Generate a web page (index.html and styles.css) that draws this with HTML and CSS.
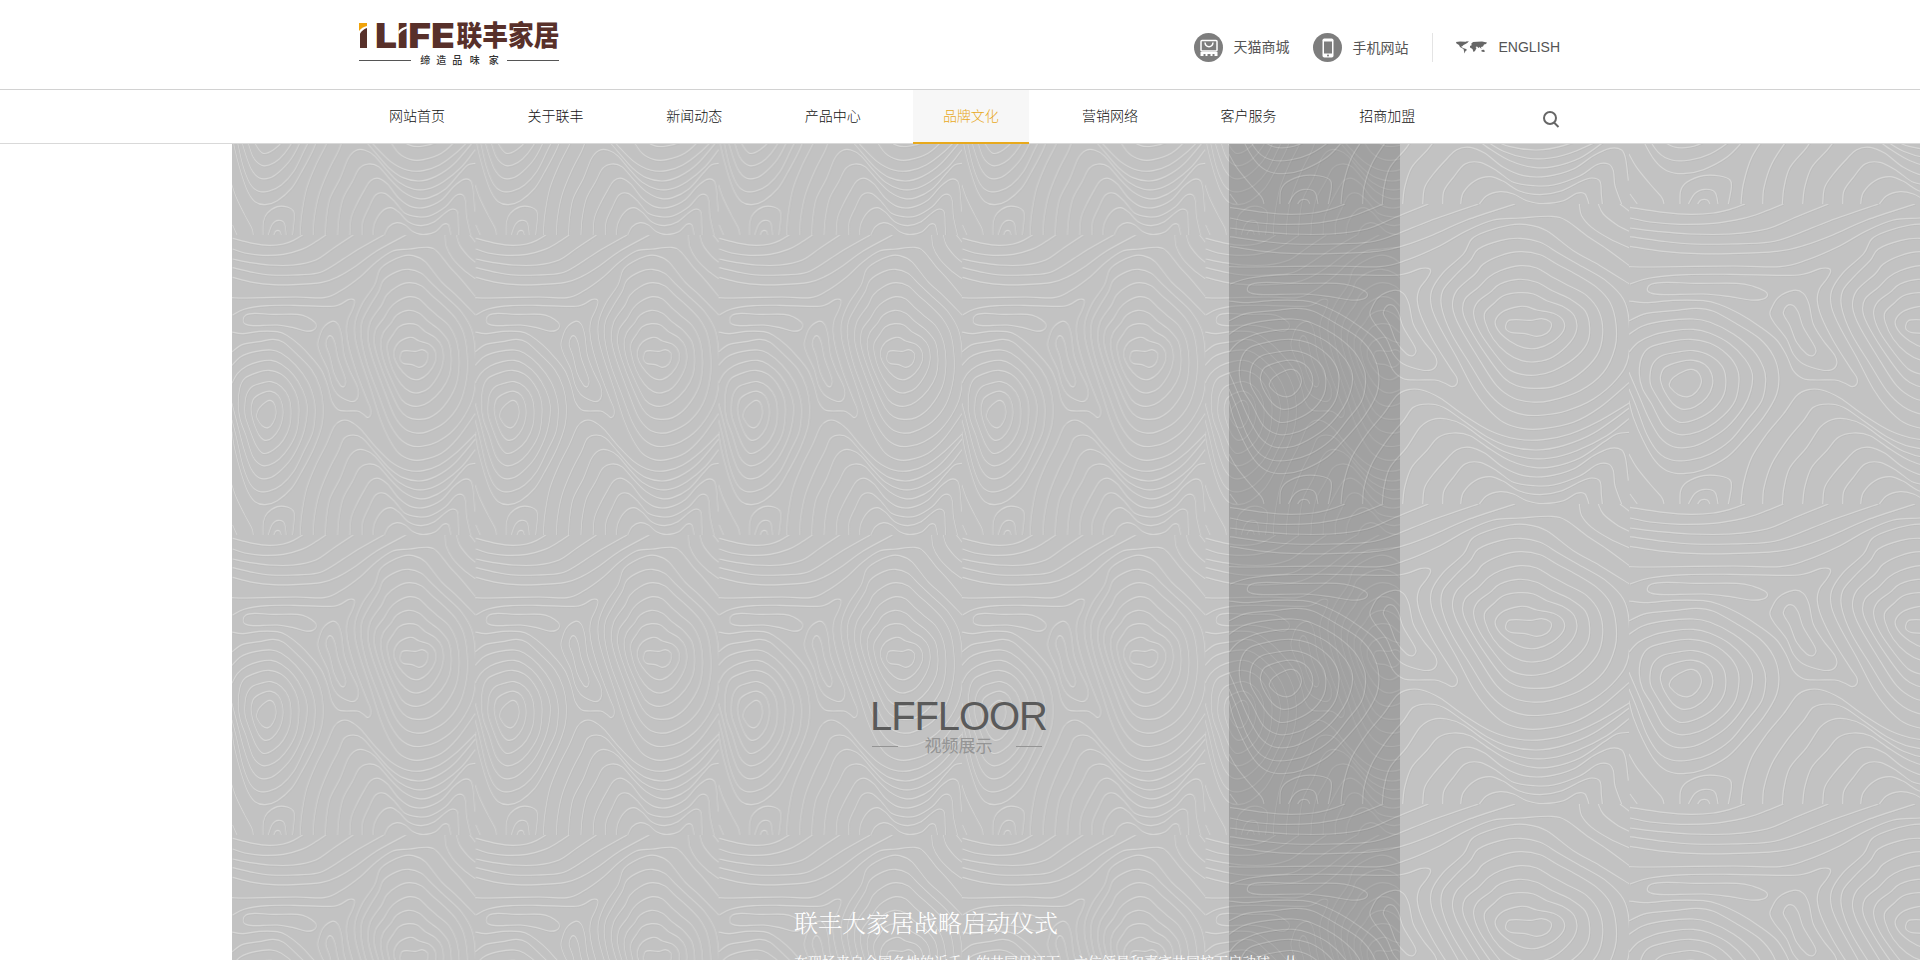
FILE: index.html
```html
<!DOCTYPE html>
<html lang="zh-CN">
<head>
<meta charset="utf-8">
<title>联丰家居</title>
<link rel="stylesheet" href="styles.css">
</head>
<body>
<header class="header">
  <div class="top">
    <a class="logo">
      <svg class="logo-mark" width="200" height="27" viewBox="0 0 200 27">
        <path class="gold" d="M0 1H8V4Q3 5 0 9Z"/>
        <path class="brown" d="M1 11.500Q4 7 8 6V26H1Z"/>
        <text class="latin" x="16" y="26" textLength="80" lengthAdjust="spacingAndGlyphs">LIFE</text>
        <path class="cut" d="M39 10Q42 5 50 4V6Q44 7 40 12Z"/>
        <text class="hanzi" x="97.500" y="24" textLength="103" lengthAdjust="spacingAndGlyphs">联丰家居</text>
      </svg>
      <span class="tagline"><i></i><b>缔造品</b><b class="wide">味家</b><i></i></span>
    </a>
    <div class="links">
      <a class="link">
        <svg width="29" height="29" viewBox="0 0 29 29"><circle class="disc" cx="14.500" cy="14.500" r="14.500"/><path class="stroke" d="M7 17V8.500Q7 7.500 8 7.500H22Q23 7.500 23 8.500V17Q23 18 22 18H8Q7 18 7 17ZM11 9.500C11.500 15 18.500 15 19 9.500"/><path class="solid" d="M6.500 19H23.500V23H20.500V21H18.500V23H16.500V21H13.500V23H11.500V21H9.500V23H6.500Z"/></svg>
        <span>天猫商城</span>
      </a>
      <a class="link phone">
        <svg width="29" height="29" viewBox="0 0 29 29"><circle class="disc" cx="14.500" cy="14.500" r="14.500"/><rect class="solid" x="9.500" y="5.500" width="11" height="19" rx="1.800"/><rect class="disc" x="11" y="8.500" width="8" height="12"/><circle class="disc" cx="15" cy="22.500" r="1"/></svg>
        <span>手机网站</span>
      </a>
      <a class="link english">
        <svg width="31" height="13" viewBox="0 0 31 13"><path class="map" d="M0 1 4 .5 9 .8 12 1.500 9.500 3 7.500 4 6 5.500 4.800 5.500 7 7 10 8 11 9 9.500 10 8.500 12.500 8 10 7.500 8 4 6 3 4 .5 2.500ZM9.500 .5 13 .3 11 2ZM15 3 17 1 21 .8 26 .5 31 1.500 30 3 28 3.500 27 5.500 25 6 25.500 8 23.500 6 22.500 7 21 5.500 19.500 6 20.500 7 19 10 17.500 11 16.500 8 14 6.500 14 5 16 4ZM25.500 9 28 8.800 29 10.500 27.500 11 25.500 10.500Z"/></svg>
        <span>ENGLISH</span>
      </a>
    </div>
  </div>
  <div class="bar">
    <nav class="nav">
      <a>网站首页</a><a>关于联丰</a><a>新闻动态</a><a>产品中心</a><a class="active">品牌文化</a><a>营销网络</a><a>客户服务</a><a>招商加盟</a>
      <svg class="search" width="17" height="17" viewBox="0 0 17 17"><circle cx="7" cy="7" r="6"/><path d="M11 11.500 15.500 16"/></svg>
    </nav>
  </div>
</header>
<main class="stage">
  <svg class="contours left" width="1168" height="816">
    <defs>
      <pattern id="tile-left" width="243.300" height="300" y="91" patternUnits="userSpaceOnUse" viewBox="0 0 1200 900" preserveAspectRatio="none">
        <path class="shade" transform="translate(4 4)"/><path class="line"/>
      </pattern>
    </defs>
    <rect width="1168" height="816" fill="url(#tile-left)"/>
  </svg>
  <svg class="contours right" width="691" height="816">
    <defs>
      <pattern id="tile-right" width="400" height="300" y="60" patternUnits="userSpaceOnUse" viewBox="0 0 1200 900" preserveAspectRatio="none">
        <path class="shade" transform="translate(3 3)"/><path class="line"/>
      </pattern>
    </defs>
    <rect width="691" height="816" fill="url(#tile-right)"/>
  </svg>
  <section class="video">
    <h2>LFFLOOR</h2>
    <div class="sub"><i></i><span>视频展示</span><i></i></div>
    <article class="story">
      <h3>联丰大家居战略启动仪式</h3>
      <p>在现场来自全国各地的近千人的共同见证下，六位领导和嘉宾共同按下启动球，从</p>
    </article>
  </section>
</main>
<script src="contours.js"></script>
</body>
</html>
```

FILE: styles.css
```css
* { box-sizing: border-box; }
body {
  margin: 0;
  height: 960px;
  overflow: hidden;
  display: flex;
  flex-direction: column;
  background: #fff;
  color: #333;
  font: 14px/20px "Liberation Sans", "Noto Sans CJK SC", sans-serif;
}
h2, h3, p { margin: 0; font-weight: 400; }
.top {
  height: 89px;
  padding: 0 360px 0 359px;
  display: flex;
  justify-content: space-between;
}
.logo { width: 200px; padding-top: 22px; }
.logo-mark { display: block; overflow: visible; }
.gold { fill: #f0a30a; }
.brown, .latin, .hanzi { fill: #58302a; }
.cut { fill: #fff; }
.latin { font: 900 34.400px Inter, sans-serif; }
.hanzi { font: 900 28px "Noto Sans CJK SC", sans-serif; }
.tagline {
  display: flex;
  align-items: center;
  justify-content: space-between;
  height: 14px;
  margin-top: 4px;
  font: 500 10px/14px "Noto Sans CJK SC", sans-serif;
  color: #333;
}
.tagline i { width: 52px; height: 1px; background: #555; }
.tagline b { font-weight: 500; letter-spacing: 6px; margin: 0 -7px 0 1px; }
.tagline .wide { letter-spacing: 9px; margin: 0 -9px 0 0; }
.links { display: flex; align-items: flex-start; padding-top: 33px; color: #555; }
.link { display: flex; align-items: center; height: 29px; gap: 11px; }
.link span { line-height: 20px; margin-top: -2px; }
.phone { margin-left: 23px; }
.phone span { margin-top: 0; }
.english { margin-left: 23px; padding-left: 24px; border-left: 1px solid #e4e4e4; }
.english svg { margin: -1px 0 0 -1px; }
.english span { margin-left: 1px; }
.disc { fill: #7d7d7d; }
.stroke { fill: none; stroke: #fff; stroke-width: 1.500; }
.solid { fill: #fff; }
.map { fill: #666; }
.bar {
  height: 55px;
  border-top: 1px solid #d2d2d2;
  border-bottom: 1px solid #d9d9d9;
}
.nav {
  height: 54px;
  padding-left: 359px;
  display: flex;
  gap: 22.600px;
}
.nav a {
  width: 116px;
  height: 54px;
  line-height: 50px;
  text-align: center;
  font-weight: 300;
  font-family: "Noto Sans CJK SC", sans-serif;
  color: #111;
}
.nav .active { padding-right: 1px; color: #e8a91c; background: #f7f7f7; border-bottom: 2px solid #e8a91c; }
.search { margin: 21px 0 0 75px; fill: none; stroke: #666; stroke-width: 2; }
.stage { position: relative; flex: 1; overflow: hidden; }
.contours { position: absolute; top: 0; background: #7a7a7a; opacity: .45; }
.contours.left { left: 232px; }
.contours.right { left: 1229px; }
.line { fill: none; stroke: #a6a6a4; stroke-width: 3.400; }
.shade { fill: none; stroke: #6c6c6c; stroke-width: 3; }
.video {
  position: relative;
  padding: 549px 0 0 870px;
}
.video h2 { font-size: 40px; line-height: 46px; letter-spacing: -1.100px; color: #5a5a5a; }
.sub {
  display: flex;
  align-items: center;
  justify-content: space-between;
  width: 170px;
  height: 20px;
  margin: -3px 0 0 2px;
  font-size: 17px;
  color: #949494;
}
.sub i { width: 26px; height: 1px; background: #949494; }
.sub span { margin: 2px 0 0 3px; }
.story {
  width: 520px;
  margin: 150px 0 0 -76px;
  color: #fff;
  font-family: "Noto Serif CJK SC", "Noto Sans CJK SC", serif;
  font-weight: 300;
}
.story h3 { font-size: 24px; line-height: 32px; font-weight: 300; }
.story p { margin-top: 13px; font-size: 14px; line-height: 20px; white-space: nowrap; }
```

FILE: contours.js
```js
// Contour lines of the wallpaper tile, as points on a 1200 x 900 grid.
// A trailing "z" closes the curve. Each half has its own x offset.
const west = [
  "0,10 100,25 180,31 250,27 300,16 345,0",
  "0,42 60,54 150,61 250,58 340,43 400,24 460,0",
  "0,72 80,82 180,90 300,90 410,75 500,38 595,0",
  "0,98 100,112 190,120 300,120 420,114 500,90 600,50 745,0",
  "0,127 100,142 200,149 300,149 440,142 520,125 610,92 710,48 855,0",
  "0,240 60,222 170,212 300,211 480,214 530,208 570,194 595,193 602,202 590,225 568,255 562,290 575,340 610,410 660,490 680,520 680,540 665,548 645,538 615,528 560,528 520,524 490,500 470,455 440,408 390,368 330,330 270,302 220,290 130,289 50,296 -3,291",
  "422,318 445,280 490,259 520,268 537,300 550,360 580,410 615,455 620,480 605,497 575,498 520,480 490,450 470,405 435,360 421,335 z",
  "460,325 470,306 488,304 505,325 520,370 550,420 558,440 548,455 530,450 500,415 480,365 465,340 z",
  "52,255 65,240 110,235 200,238 320,238 370,247 405,262 412,275 395,286 360,288 300,278 220,270 100,272 62,267 z",
  "118,540 130,520 165,500 190,497 208,510 214,535 200,562 175,578 145,572 122,552 z",
  "92,515 105,490 150,473 190,469 225,482 245,510 247,545 230,580 195,608 160,616 130,600 105,565 93,535 z",
  "60,515 68,480 95,455 150,443 190,440 240,455 275,485 287,520 282,570 250,615 200,645 150,655 115,630 85,585 63,545 z",
  "28,510 35,460 60,430 120,413 180,406 240,418 290,450 320,490 327,530 315,590 280,635 230,672 180,690 140,690 100,665 65,600 38,555 z",
  "-3,444 25,415 70,393 130,380 190,376 240,388 300,420 345,465 367,510 362,560 340,610 290,670 230,710 180,729 130,728 90,700 55,640 25,570 -3,505",
  "-3,391 40,365 110,350 190,345 240,355 310,390 370,440 400,490 407,530 395,590 350,650 300,710 240,750 180,768 125,768 85,745 50,690 20,610 -3,555",
  "-3,350 50,328 130,320 200,313 250,322 320,360 390,405 430,455 446,510 440,570 400,640 340,710 290,760 220,797 160,809 110,800 75,770 40,710 10,640 -3,590",
  "-3,750 20,790 60,840 95,880 102,900",
  "0,870 22,900",
  "150,900 152,860 170,835 220,815 270,816 300,828 304,850 295,900",
  "175,900 195,868 225,856 255,865 264,900",
  "203,900 213,888 232,888 240,900"
];
const east = [
  "-513,188 -440,189 -200,186 -60,188 20,168 120,125 200,80 280,48 360,42 455,37 500,50 560,95 620,135 688,185",
  "538,0 545,35 575,70 630,105 688,132",
  "595,0 610,30 650,62 688,82",
  "660,0 688,22",
  "688,240 600,185 520,140 440,80 380,62 330,63 260,82 215,105 190,150 130,205 95,260 95,310 120,370 170,460 220,555 260,610 310,655 370,674 430,674 520,655 600,610 688,535",
  "360,103 300,110 235,135 210,170 165,215 128,260 125,310 155,390 210,480 260,560 310,608 370,632 430,633 500,620 580,585 650,525 685,460 687,350 670,285 620,232 550,190 480,150 420,115 z",
  "360,143 300,155 250,180 225,210 170,260 158,310 180,370 240,470 290,545 340,582 395,594 450,590 540,560 610,505 645,430 648,360 630,295 590,250 530,212 470,180 420,152 z",
  "360,185 300,200 265,220 235,250 195,285 189,325 210,375 260,455 310,520 350,545 400,553 460,548 530,515 590,455 608,390 598,325 560,275 500,242 450,215 410,192 z",
  "355,226 300,240 270,265 232,295 221,330 240,385 285,450 325,495 365,511 410,513 460,500 520,465 560,420 569,370 555,320 510,285 460,262 410,235 z",
  "355,266 310,275 285,295 255,325 256,355 280,405 320,447 365,470 410,473 460,458 510,415 530,375 523,335 490,308 440,290 400,270 z",
  "355,308 310,322 286,350 295,380 330,412 370,431 410,433 455,415 490,380 490,350 460,328 410,318 380,308 z",
  "317,365 325,350 350,347 390,349 425,344 450,353 454,368 440,388 410,397 375,389 335,386 320,378 z",
  "-177,900 -170,840 -145,760 -100,690 -50,630 -10,575 25,557 65,558 120,582 190,632 270,680 350,705 430,707 510,690 590,655 688,597",
  "-112,900 -108,850 -85,780 -40,710 10,650 40,610 85,600 130,610 190,650 260,698 330,728 410,738 490,725 580,688 688,612",
  "-53,900 -48,850 -30,790 20,730 60,670 95,647 140,645 190,663 250,705 310,742 380,762 450,762 530,740 620,695 688,643",
  "8,900 14,850 35,790 80,740 115,700 160,687 210,695 270,735 330,770 400,790 460,788 540,762 610,715 650,690 688,685",
  "68,900 74,850 100,810 140,765 170,737 210,730 255,748 310,790 370,815 440,817 520,795 580,755 630,733 665,738 677,765 685,830",
  "128,900 132,860 160,820 195,780 240,775 290,800 340,835 400,845 460,843 540,815 590,782 625,780 640,800 645,845 665,900",
  "182,900 190,865 225,830 270,818 310,832 360,862 420,872 480,862 540,833 575,822 600,832 604,870 607,900",
  "238,900 260,875 300,863 340,870 380,890 430,899 490,890 530,868 555,870 567,900"
];

function smooth(text, dx) {
  const closed = text.endsWith("z");
  const p = text.replace(" z", "").split(" ").map(s => {
    const [x, y] = s.split(",").map(Number);
    return [x + dx, y];
  });
  const n = p.length;
  const at = i => closed ? p[(i + n) % n] : p[Math.max(0, Math.min(n - 1, i))];
  let d = "M" + p[0];
  for (let i = 0; i < (closed ? n : n - 1); i++) {
    const [a, b, c, e] = [at(i - 1), at(i), at(i + 1), at(i + 2)];
    const c1 = [b[0] + (c[0] - a[0]) / 6, b[1] + (c[1] - a[1]) / 6];
    const c2 = [c[0] - (e[0] - b[0]) / 6, c[1] - (e[1] - b[1]) / 6];
    d += "C" + c1 + " " + c2 + " " + c;
  }
  return d;
}

const contour = west.map(t => smooth(t, 3)).concat(east.map(t => smooth(t, 513))).join("");
document.querySelectorAll(".line, .shade").forEach(el => el.setAttribute("d", contour));
```
